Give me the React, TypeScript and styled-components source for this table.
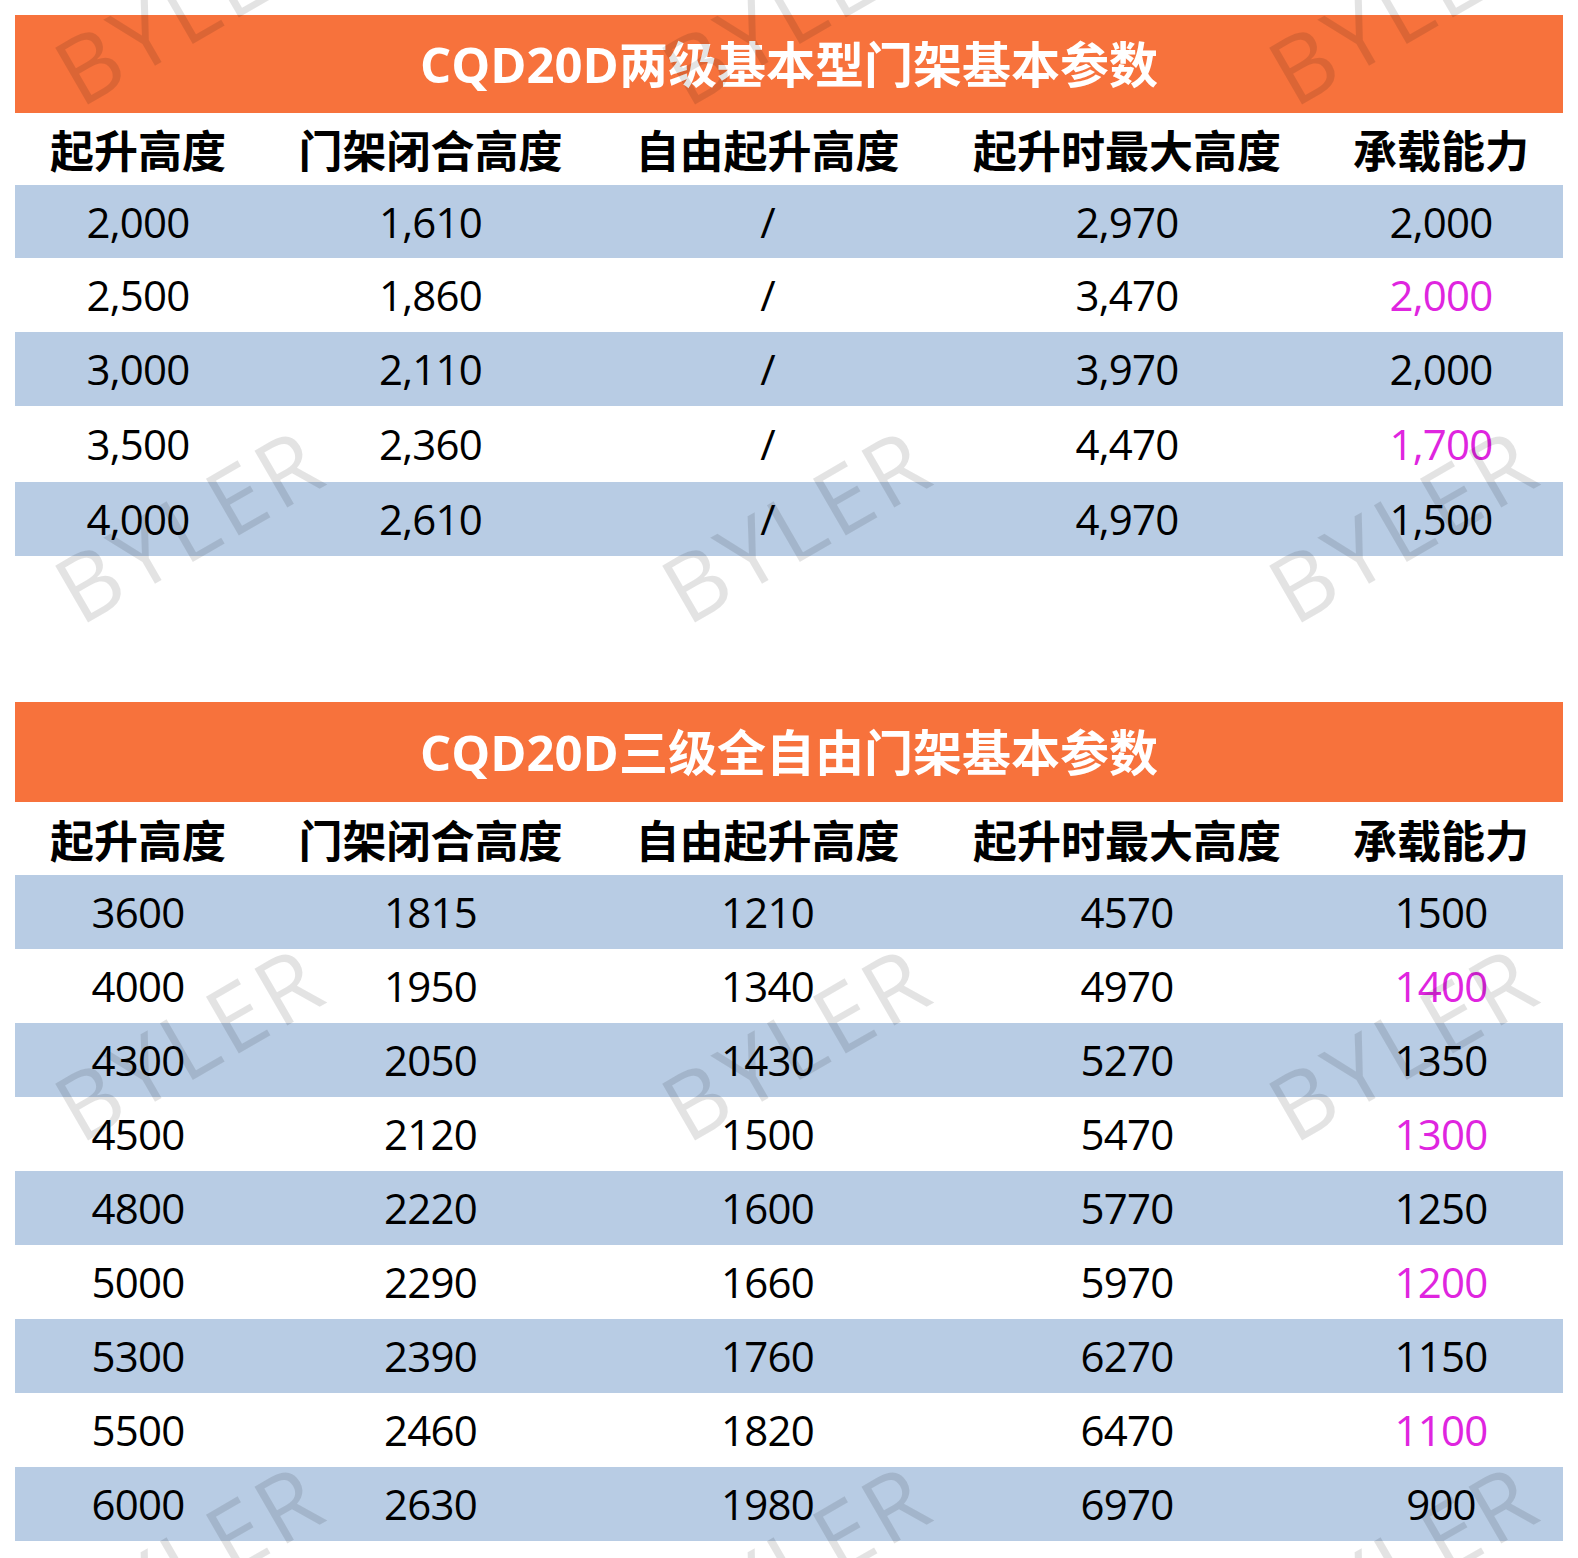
import React from "react";
import styled, { createGlobalStyle } from "styled-components";

const GlobalStyle = createGlobalStyle`
  html, body {
    margin: 0;
    padding: 0;
    background: #ffffff;
  }
`;

const COLS = "246px 339px 335px 384px 244px";

const Page = styled.div`
  position: relative;
  width: 1578px;
  height: 1558px;
  overflow: hidden;
  box-sizing: border-box;
  padding: 15px 15px 0 15px;
  display: flex;
  flex-direction: column;
  gap: 146px;
`;

const Table = styled.section`
  display: flex;
  flex-direction: column;
  width: 1548px;
`;

const TitleBar = styled.div<{ $h: number }>`
  height: ${(p) => p.$h}px;
  background: #f7723c;
  display: flex;
  align-items: center;
  justify-content: center;
  color: #ffffff;
  font-family: "Open Sans", "Noto Sans CJK SC", sans-serif;
  font-weight: 700;
  font-size: 49px;
  line-height: 1;
`;

const HeaderRow = styled.div<{ $h: number }>`
  display: grid;
  grid-template-columns: ${COLS};
  height: ${(p) => p.$h}px;
  background: #ffffff;
  font-family: "Noto Sans CJK SC", sans-serif;
  font-weight: 700;
  font-size: 44px;
  color: #000000;
`;

const DataRow = styled.div<{ $striped: boolean; $h: number }>`
  display: grid;
  grid-template-columns: ${COLS};
  height: ${(p) => p.$h}px;
  background: ${(p) => (p.$striped ? "#b8cce4" : "#ffffff")};
  font-family: "Open Sans", "Noto Sans", sans-serif;
  font-size: 42px;
  letter-spacing: -0.8px;
  color: #000000;
`;

const Cell = styled.div<{ $accent?: boolean }>`
  display: flex;
  align-items: center;
  justify-content: center;
  line-height: 1;
  white-space: nowrap;
  color: ${(p) => (p.$accent ? "#df25df" : "inherit")};
`;

const WatermarkLayer = styled.div`
  position: absolute;
  inset: 0;
  pointer-events: none;
`;

const Mark = styled.span<{ $x: number; $y: number }>`
  position: absolute;
  left: ${(p) => p.$x}px;
  top: ${(p) => p.$y}px;
  transform: translate(-50%, -50%) rotate(-30deg);
  font-family: "Open Sans", sans-serif;
  font-size: 92px;
  letter-spacing: 5px;
  padding-left: 5px;
  line-height: 1;
  white-space: nowrap;
  color: rgba(0, 0, 0, 0.11);
`;

const HEADERS = ["起升高度", "门架闭合高度", "自由起升高度", "起升时最大高度", "承载能力"];

type TableData = {
  title: string;
  titleH: number;
  headerH: number;
  rows: string[][];
  heights: number[];
};

const tables: TableData[] = [
  {
    title: "CQD20D两级基本型门架基本参数",
    titleH: 98,
    headerH: 72,
    heights: [73, 74, 74, 76, 74],
    rows: [
      ["2,000", "1,610", "/", "2,970", "2,000"],
      ["2,500", "1,860", "/", "3,470", "2,000"],
      ["3,000", "2,110", "/", "3,970", "2,000"],
      ["3,500", "2,360", "/", "4,470", "1,700"],
      ["4,000", "2,610", "/", "4,970", "1,500"],
    ],
  },
  {
    title: "CQD20D三级全自由门架基本参数",
    titleH: 100,
    headerH: 73,
    heights: [74, 74, 74, 74, 74, 74, 74, 74, 74],
    rows: [
      ["3600", "1815", "1210", "4570", "1500"],
      ["4000", "1950", "1340", "4970", "1400"],
      ["4300", "2050", "1430", "5270", "1350"],
      ["4500", "2120", "1500", "5470", "1300"],
      ["4800", "2220", "1600", "5770", "1250"],
      ["5000", "2290", "1660", "5970", "1200"],
      ["5300", "2390", "1760", "6270", "1150"],
      ["5500", "2460", "1820", "6470", "1100"],
      ["6000", "2630", "1980", "6970", "900"],
    ],
  },
];

const MARK_X = [187, 794, 1401];
const MARK_Y = [7, 525, 1043, 1561];

export default function App() {
  return (
    <>
      <GlobalStyle />
      <Page>
        {tables.map((t) => (
          <Table key={t.title}>
            <TitleBar $h={t.titleH}>{t.title}</TitleBar>
            <HeaderRow $h={t.headerH}>
              {HEADERS.map((h) => (
                <Cell key={h}>{h}</Cell>
              ))}
            </HeaderRow>
            {t.rows.map((r, i) => (
              <DataRow key={i} $striped={i % 2 === 0} $h={t.heights[i]}>
                {r.map((v, j) => (
                  <Cell key={j} $accent={j === 4 && i % 2 === 1}>
                    {v}
                  </Cell>
                ))}
              </DataRow>
            ))}
          </Table>
        ))}
        <WatermarkLayer>
          {MARK_Y.map((y) =>
            MARK_X.map((x) => (
              <Mark key={`${x}-${y}`} $x={x} $y={y}>
                BYLER
              </Mark>
            ))
          )}
        </WatermarkLayer>
      </Page>
    </>
  );
}
